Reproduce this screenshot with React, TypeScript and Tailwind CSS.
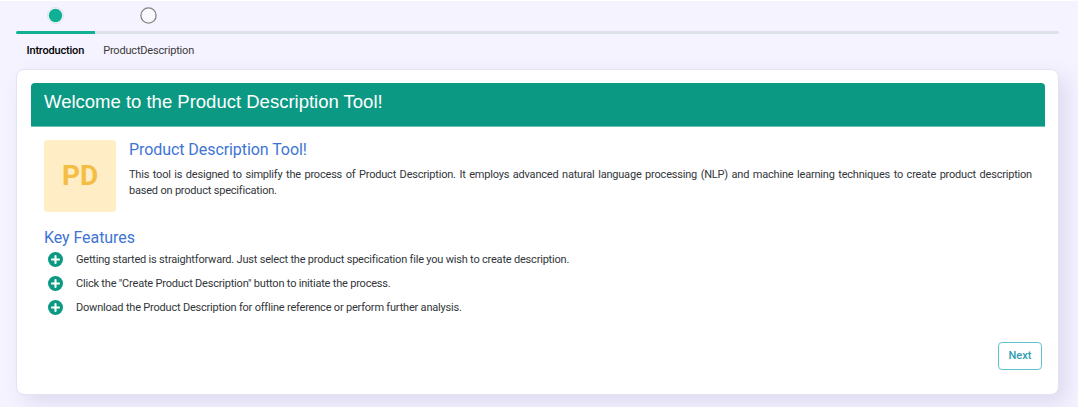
const steps = [
  { label: 'Introduction', active: true },
  { label: 'ProductDescription', active: false },
];

const features = [
  'Getting started is straightforward. Just select the product specification file you wish to create description.',
  'Click the "Create Product Description" button to initiate the process.',
  'Download the Product Description for offline reference or perform further analysis.',
];

function PlusIcon() {
  return (
    <svg className="mt-px size-[15px] shrink-0" viewBox="0 0 15 15" aria-hidden="true">
      <circle cx="7.5" cy="7.5" r="7.5" fill="#0c9983" />
      <path d="M7.5 4v7M4 7.5h7" stroke="#fff" strokeWidth="2.1" strokeLinecap="round" />
    </svg>
  );
}

function Stepper() {
  return (
    <nav className="flex h-[68px] flex-col">
      <div className="flex h-[30px] items-start pt-[6px]">
        <div className="flex w-[79px] justify-center">
          <svg className="size-[17px]" viewBox="0 0 17 17" aria-hidden="true">
            <circle cx="8.5" cy="8.5" r="8" fill="#f8f8fd" stroke="#dddfe4" strokeWidth="0.9" />
            <circle cx="8.5" cy="8.5" r="6.7" fill="#10b097" />
          </svg>
        </div>
        <div className="flex w-[107px] justify-center">
          <svg className="size-[17px]" viewBox="0 0 17 17" aria-hidden="true">
            <circle cx="8.5" cy="8.5" r="7.6" fill="#f8f8fd" stroke="#858585" strokeWidth="1.3" />
          </svg>
        </div>
      </div>
      <div className="h-[3px] w-[1043px] overflow-hidden rounded-xs bg-[#dfe1e8]">
        <div className="h-full w-[79px] bg-[#10b097]" />
      </div>
      <div className="flex gap-[19px] pt-[9px] pl-[10.5px] text-[11px] leading-4 tracking-[-0.18px]">
        {steps.map((step) => (
          <span key={step.label} className={step.active ? 'font-medium text-black' : 'text-[#3a3a3a]'}>
            {step.label}
          </span>
        ))}
      </div>
    </nav>
  );
}

export default function App() {
  return (
    <div className="h-[408px] overflow-hidden border-y border-white bg-[#f5f3ff] px-4 font-[Roboto,sans-serif] text-[#32363a]">
      <Stepper />
      <main className="flex h-[326px] w-[1043px] flex-col rounded-lg border border-[#e5e2f4] bg-white px-[13.5px] pt-[13px] shadow-[8px_8px_20px_#dedaf0]">
        <header className="h-[44px] w-[1014.5px] shrink-0 rounded-t-[4px] border-b border-[#68c0b3] bg-[#0c9983] px-[13.5px] pt-[7px]">
          <h1 className="font-['Liberation_Sans',sans-serif] text-[18.5px] leading-6 whitespace-nowrap text-white">
            Welcome to the Product Description Tool!
          </h1>
        </header>
        <section className="flex gap-[13px] pt-[13px] pl-[13.5px]">
          <div className="flex size-[72px] shrink-0 items-center justify-center rounded-[4px] bg-[#ffedc5] text-[28px] font-bold text-[#f4bd43]">
            PD
          </div>
          <div className="w-[903px]">
            <h2 className="text-[16px] leading-5 tracking-[-0.07px] text-[#3e75d4]">Product Description Tool!</h2>
            <p className="mt-[7px] text-justify text-[11px] leading-4 tracking-[-0.2px]">
              This tool is designed to simplify the process of Product Description. It employs advanced natural language
              processing (NLP) and machine learning techniques to create product description based on product
              specification.
            </p>
          </div>
        </section>
        <section className="pt-[16px] pl-[13.5px]">
          <h2 className="text-[16px] leading-5 tracking-[-0.07px] text-[#3e75d4]">Key Features</h2>
          <ul className="pl-1">
            {features.map((feature) => (
              <li key={feature} className="flex h-6 items-start gap-[13px] pt-[3px] text-[11px] leading-[18px] tracking-[-0.2px]">
                <PlusIcon />
                <span>{feature}</span>
              </li>
            ))}
          </ul>
        </section>
        <div className="flex justify-end pt-[22px] pr-[2.5px]">
          <button className="h-[28px] w-[44px] rounded-[4px] border border-[#60c1cf] pt-px text-[11px] font-medium text-[#2c9db2]">
            Next
          </button>
        </div>
      </main>
    </div>
  );
}
